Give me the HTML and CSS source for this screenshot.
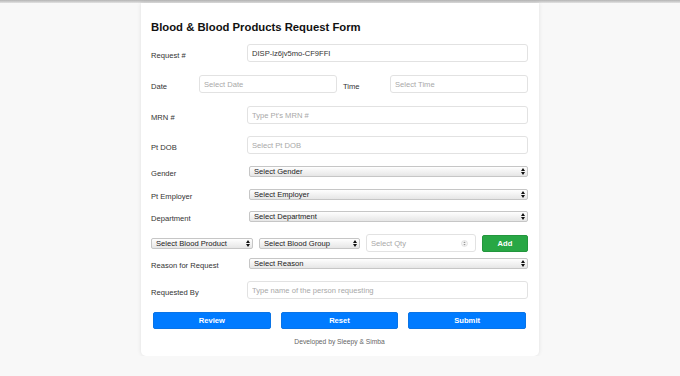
FILE: index.html
```html
<!DOCTYPE html>
<html>
<head>
  <title>Blood Request Form</title>
  <link rel="stylesheet" href="styles.css">
</head>
<body>
  <div class="topbar"></div>
  <div class="card">
    <h1 class="title">Blood &amp; Blood Products Request Form</h1>
    <form class="form">
      <div class="row">
        <label>Request #</label>
        <input class="field value" type="text" value="DISP-lz6jv5mo-CF9FFI">
      </div>
      <div class="row row-datetime gap-13">
        <label>Date</label>
        <input class="field" type="text" placeholder="Select Date">
        <label class="time-label">Time</label>
        <input class="field" type="text" placeholder="Select Time">
      </div>
      <div class="row gap-13">
        <label>MRN #</label>
        <input class="field" type="text" placeholder="Type Pt's MRN #">
      </div>
      <div class="row gap-12">
        <label>Pt DOB</label>
        <input class="field" type="text" placeholder="Select Pt DOB">
      </div>
      <div class="row gap-10">
        <label>Gender</label>
        <div class="select-wrap indent">
          <select class="select"><option>Select Gender</option></select>
          <svg class="arrows" width="4" height="7" viewBox="0 0 4 7"><path d="M0 3 L2 0 L4 3 Z M0 4 L2 7 L4 4 Z" fill="#111"/></svg>
        </div>
      </div>
      <div class="row gap-8">
        <label>Pt Employer</label>
        <div class="select-wrap indent">
          <select class="select"><option>Select Employer</option></select>
          <svg class="arrows" width="4" height="7" viewBox="0 0 4 7"><path d="M0 3 L2 0 L4 3 Z M0 4 L2 7 L4 4 Z" fill="#111"/></svg>
        </div>
      </div>
      <div class="row gap-7">
        <label>Department</label>
        <div class="select-wrap indent">
          <select class="select"><option>Select Department</option></select>
          <svg class="arrows" width="4" height="7" viewBox="0 0 4 7"><path d="M0 3 L2 0 L4 3 Z M0 4 L2 7 L4 4 Z" fill="#111"/></svg>
        </div>
      </div>
      <div class="product-row gap-10">
        <div class="select-wrap">
          <select class="select"><option>Select Blood Product</option></select>
          <svg class="arrows" width="4" height="7" viewBox="0 0 4 7"><path d="M0 3 L2 0 L4 3 Z M0 4 L2 7 L4 4 Z" fill="#111"/></svg>
        </div>
        <div class="select-wrap">
          <select class="select"><option>Select Blood Group</option></select>
          <svg class="arrows" width="4" height="7" viewBox="0 0 4 7"><path d="M0 3 L2 0 L4 3 Z M0 4 L2 7 L4 4 Z" fill="#111"/></svg>
        </div>
        <div class="qty">
          <input class="qty-input" type="text" placeholder="Select Qty">
          <svg class="spinner" width="7" height="7" viewBox="0 0 7 7">
            <circle cx="3.5" cy="3.5" r="3" fill="#f4f4f4" stroke="#d8d8d8" stroke-width="0.6"/>
            <path d="M2.3 3 L3.5 1.6 L4.7 3 Z M2.3 4 L3.5 5.4 L4.7 4 Z" fill="#9a9a9a"/>
          </svg>
        </div>
        <button type="button" class="btn btn-add">Add</button>
      </div>
      <div class="row gap-4">
        <label>Reason for Request</label>
        <div class="select-wrap indent">
          <select class="select"><option>Select Reason</option></select>
          <svg class="arrows" width="4" height="7" viewBox="0 0 4 7"><path d="M0 3 L2 0 L4 3 Z M0 4 L2 7 L4 4 Z" fill="#111"/></svg>
        </div>
      </div>
      <div class="row gap-10">
        <label>Requested By</label>
        <input class="field" type="text" placeholder="Type name of the person requesting">
      </div>
      <div class="actions gap-13">
        <button type="button" class="btn btn-blue">Review</button>
        <button type="button" class="btn btn-blue">Reset</button>
        <button type="button" class="btn btn-blue">Submit</button>
      </div>
    </form>
    <p class="footer">Developed by Sleepy &amp; Simba</p>
  </div>
</body>
</html>
```

FILE: styles.css
```css
body {
  margin: 0;
  background-color: #f8f8f8;
  font-family: "Liberation Sans", Arial, sans-serif;
  color: #333;
}
.topbar {
  height: 3px;
  background: linear-gradient(#b4b4b4, #e2e2e2);
}
.card {
  width: 377px;
  margin: 0 auto;
  padding: 17px 11px 9px 10px;
  background-color: #fff;
  border-radius: 0 0 5px 5px;
  box-shadow: 0 0 4px rgba(0, 0, 0, 0.1);
}
.title {
  margin: 0 0 10px;
  font-size: 11.3px;
  line-height: 14px;
  font-weight: bold;
  color: #111;
}
.form {
  display: flex;
  flex-direction: column;
}
.row {
  display: grid;
  grid-template-columns: 96px 1fr;
  align-items: center;
}
.row label {
  padding-top: 5px;
  font-size: 7.6px;
  line-height: 10px;
  color: #333;
}
.row-datetime {
  grid-template-columns: 48px 138px 53px 138px;
}
.time-label {
  padding-left: 6px;
}
.gap-4 { margin-top: 4px; }
.gap-7 { margin-top: 7px; }
.gap-8 { margin-top: 8px; }
.gap-10 { margin-top: 10px; }
.gap-12 { margin-top: 12px; }
.gap-13 { margin-top: 13px; }
.field {
  box-sizing: border-box;
  height: 18px;
  width: 100%;
  min-width: 0;
  margin: 0;
  padding: 0 4px;
  border: 1px solid #e2e2e2;
  border-radius: 3px;
  font-family: inherit;
  font-size: 7.6px;
  color: #333;
  background-color: #fff;
}
.field::placeholder,
.qty-input::placeholder {
  color: #a8a8a8;
}
.select-wrap {
  position: relative;
  height: 11px;
  min-width: 0;
}
.select-wrap.indent {
  margin-left: 2px;
}
.select {
  -webkit-appearance: none;
  appearance: none;
  box-sizing: border-box;
  display: block;
  width: 100%;
  height: 11px;
  margin: 0;
  padding: 0 4px;
  border: 1px solid #c6c6c6;
  border-radius: 2px;
  background: linear-gradient(#fefefe, #e6e6e6);
  font-family: inherit;
  font-size: 7.6px;
  line-height: 9px;
  color: #222;
}
.arrows {
  position: absolute;
  right: 3px;
  top: 2px;
  pointer-events: none;
}
.product-row {
  display: grid;
  grid-template-columns: 102px 101px minmax(0, 1fr) 46px;
  column-gap: 6px;
  align-items: center;
  height: 18px;
}
.qty {
  display: flex;
  align-items: center;
  box-sizing: border-box;
  min-width: 0;
  height: 18px;
  padding: 0 7px 0 4px;
  border: 1px solid #e2e2e2;
  border-radius: 3px;
}
.qty-input {
  flex: 1;
  width: 100%;
  min-width: 0;
  border: none;
  padding: 0;
  font-family: inherit;
  font-size: 7.6px;
  outline: none;
}
.btn {
  margin: 0;
  padding: 0;
  border-radius: 2px;
  color: #fff;
  font-family: inherit;
  font-size: 7.6px;
  font-weight: bold;
  cursor: pointer;
}
.btn-add {
  height: 17px;
  background-color: #28a745;
  border: 1px solid #23963d;
}
.actions {
  display: grid;
  grid-template-columns: 1fr 1fr 1fr;
  column-gap: 10px;
  padding: 0 2px;
}
.btn-blue {
  height: 17px;
  background-color: #007bff;
  border: 1px solid #0a74e6;
}
.footer {
  margin: 8px 0 0;
  text-align: center;
  font-size: 6.7px;
  line-height: 10px;
  color: #666;
}
```
